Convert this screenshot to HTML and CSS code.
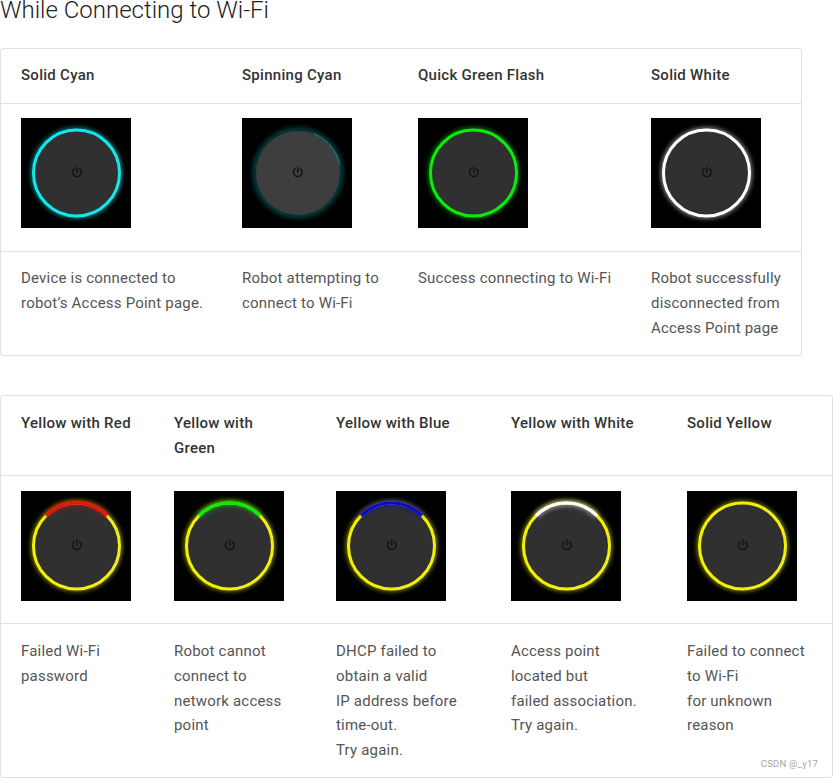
FILE: index.html
```html
<!DOCTYPE html>
<html lang="en">
<head>
<meta charset="utf-8">
<title>While Connecting to Wi-Fi</title>
<link rel="stylesheet" href="styles.css">
</head>
<body>
<svg class="defs" aria-hidden="true">
  <symbol id="power" viewBox="0 0 110 110">
    <path class="power" d="M53 50.8a4.4 4.4 0 1 0 5.6 0M55.8 48.9v5.4"/>
  </symbol>
</svg>
<main class="page">
  <h2 class="title">While Connecting to Wi-Fi</h2>

  <div class="card card-a">
    <table>
      <colgroup><col class="a1"><col class="a2"><col class="a3"><col class="a4"></colgroup>
      <thead><tr><th>Solid Cyan</th><th>Spinning Cyan</th><th>Quick Green Flash</th><th>Solid White</th></tr></thead>
      <tbody>
        <tr class="images">
          <td><svg class="led" viewBox="0 0 110 110"><circle class="ring glow cyan" cx="55.5" cy="55" r="43"/><circle class="disc" cx="55.5" cy="55" r="42.5"/><circle class="ring cyan" cx="55.5" cy="55" r="43"/><use href="#power"/></svg></td>
          <td><svg class="led" viewBox="0 0 110 110"><circle class="ring glow dim" cx="56" cy="55" r="42.5"/><path class="ring spin" d="M71 16.5A42 42 0 0 1 97 47"/><circle class="disc light" cx="56" cy="55" r="42"/><use href="#power"/></svg></td>
          <td><svg class="led" viewBox="0 0 110 110"><circle class="ring glow green" cx="55.5" cy="55" r="43"/><circle class="disc" cx="55.5" cy="55" r="42.5"/><circle class="ring green" cx="55.5" cy="55" r="43"/><use href="#power"/></svg></td>
          <td><svg class="led" viewBox="0 0 110 110"><circle class="ring glow white" cx="55.5" cy="55" r="43"/><circle class="disc" cx="55.5" cy="55" r="42.5"/><circle class="ring white" cx="55.5" cy="55" r="43"/><use href="#power"/></svg></td>
        </tr>
        <tr>
          <td>Device is connected to<br>robot’s Access Point page.</td>
          <td>Robot attempting to<br>connect to Wi-Fi</td>
          <td>Success connecting to Wi-Fi</td>
          <td>Robot successfully<br>disconnected from<br>Access Point page</td>
        </tr>
      </tbody>
    </table>
  </div>

  <div class="card card-b">
    <table>
      <colgroup><col class="b1"><col class="b2"><col class="b3"><col class="b4"><col class="b5"></colgroup>
      <thead><tr><th>Yellow with Red</th><th>Yellow with<br>Green</th><th>Yellow with Blue</th><th>Yellow with White</th><th>Solid Yellow</th></tr></thead>
      <tbody>
        <tr class="images">
          <td><svg class="led" viewBox="0 0 110 110"><circle class="ring glow yellow" cx="55.5" cy="55" r="43"/><circle class="disc" cx="55.5" cy="55" r="42.5"/><circle class="ring yellow" cx="55.5" cy="55" r="43"/><path class="ring glow red" d="M25.1 24.6A43 43 0 0 1 85.9 24.6"/><path class="ring arc red" d="M25.1 24.6A43 43 0 0 1 85.9 24.6"/><use href="#power"/></svg></td>
          <td><svg class="led" viewBox="0 0 110 110"><circle class="ring glow yellow" cx="55.5" cy="55" r="43"/><circle class="disc" cx="55.5" cy="55" r="42.5"/><circle class="ring yellow" cx="55.5" cy="55" r="43"/><path class="ring glow green" d="M25.1 24.6A43 43 0 0 1 85.9 24.6"/><path class="ring arc green" d="M25.1 24.6A43 43 0 0 1 85.9 24.6"/><use href="#power"/></svg></td>
          <td><svg class="led" viewBox="0 0 110 110"><circle class="ring glow yellow" cx="55.5" cy="55" r="43"/><circle class="disc" cx="55.5" cy="55" r="42.5"/><circle class="ring yellow" cx="55.5" cy="55" r="43"/><path class="ring glow blue" d="M25.1 24.6A43 43 0 0 1 85.9 24.6"/><path class="ring arc blue" d="M25.1 24.6A43 43 0 0 1 85.9 24.6"/><use href="#power"/></svg></td>
          <td><svg class="led" viewBox="0 0 110 110"><circle class="ring glow yellow" cx="55.5" cy="55" r="43"/><circle class="disc" cx="55.5" cy="55" r="42.5"/><circle class="ring yellow" cx="55.5" cy="55" r="43"/><path class="ring glow white" d="M25.1 24.6A43 43 0 0 1 85.9 24.6"/><path class="ring arc white" d="M25.1 24.6A43 43 0 0 1 85.9 24.6"/><use href="#power"/></svg></td>
          <td><svg class="led" viewBox="0 0 110 110"><circle class="ring glow yellow" cx="55.5" cy="55" r="43"/><circle class="disc" cx="55.5" cy="55" r="42.5"/><circle class="ring yellow" cx="55.5" cy="55" r="43"/><use href="#power"/></svg></td>
        </tr>
        <tr class="notes">
          <td>Failed Wi-Fi<br>password</td>
          <td>Robot cannot<br>connect to<br>network access<br>point</td>
          <td>DHCP failed to<br>obtain a valid<br>IP address before<br>time-out.<br>Try again.</td>
          <td>Access point<br>located but<br>failed association.<br>Try again.</td>
          <td>Failed to connect<br>to Wi-Fi<br>for unknown<br>reason</td>
        </tr>
      </tbody>
    </table>
    <span class="watermark">CSDN @_y17</span>
  </div>
</main>
</body>
</html>
```
FILE: styles.css
```css
* { box-sizing: border-box; }
html, body { margin: 0; padding: 0; background: #fff; }
body { font-family: Roboto, "Liberation Sans", sans-serif; color: #555; overflow: hidden; }
.defs { display: none; }
.page { display: flex; flex-direction: column; width: 833px; }
.title { margin: 0 0 27px; font-size: 24px; line-height: 21px; font-weight: 300; color: #222; }
.card { position: relative; border: 1px solid #e0e0e0; border-radius: 3px; background: #fff; }
.card-a { width: 802px; margin-bottom: 39px; }
.card-b { width: 833px; }
table { border-collapse: collapse; table-layout: fixed; width: 100%; }
.a1 { width: 221px; } .a2 { width: 176px; } .a3 { width: 233px; } .a4 { width: 170px; }
.b1 { width: 153px; } .b2 { width: 162px; } .b3 { width: 175px; } .b4 { width: 176px; } .b5 { width: 165px; }
th, td { padding: 14px 0 14px 20px; text-align: left; vertical-align: top; font-size: 15px; line-height: 25px; }
th { padding-bottom: 15px; font-weight: 500; color: #333; letter-spacing: 0.28px; }
td { font-weight: 400; letter-spacing: 0.2px; }
thead tr, .images { border-bottom: 1px solid #e0e0e0; }
.images td { padding-bottom: 23px; }
.card-b th { padding-top: 15px; padding-bottom: 14px; }
.card-b td { padding-top: 15px; padding-bottom: 14px; }
.card-b .images td { padding-bottom: 22px; }
.card-b .notes td { line-height: 24.75px; }
.led { display: block; width: 110px; height: 110px; background: #000; }
.disc { fill: #303030; }
.disc.light { fill: #3e3e3e; }
.ring { fill: none; stroke-width: 3; }
.arc { stroke-width: 3.2; }
.glow { stroke-width: 4; filter: blur(2.5px); opacity: 0.7; }
.cyan { stroke: #12e8ec; }
.green { stroke: #0ceb0c; }
.white { stroke: #fff; }
.yellow { stroke: #f2f00a; }
.red { stroke: #ea1010; }
.blue { stroke: #0808d0; }
.dim { stroke: #0f7a7b; stroke-width: 5; opacity: 0.6; }
.spin { stroke: #0f7a7b; }
.power { fill: none; stroke: #141414; stroke-width: 1.5; stroke-linecap: round; }
.watermark { position: absolute; right: 14px; bottom: 7px; font-family: Roboto, "Liberation Sans", sans-serif; font-size: 9.5px; line-height: 12px; color: #a5a5a5; letter-spacing: 0.2px; }
```
